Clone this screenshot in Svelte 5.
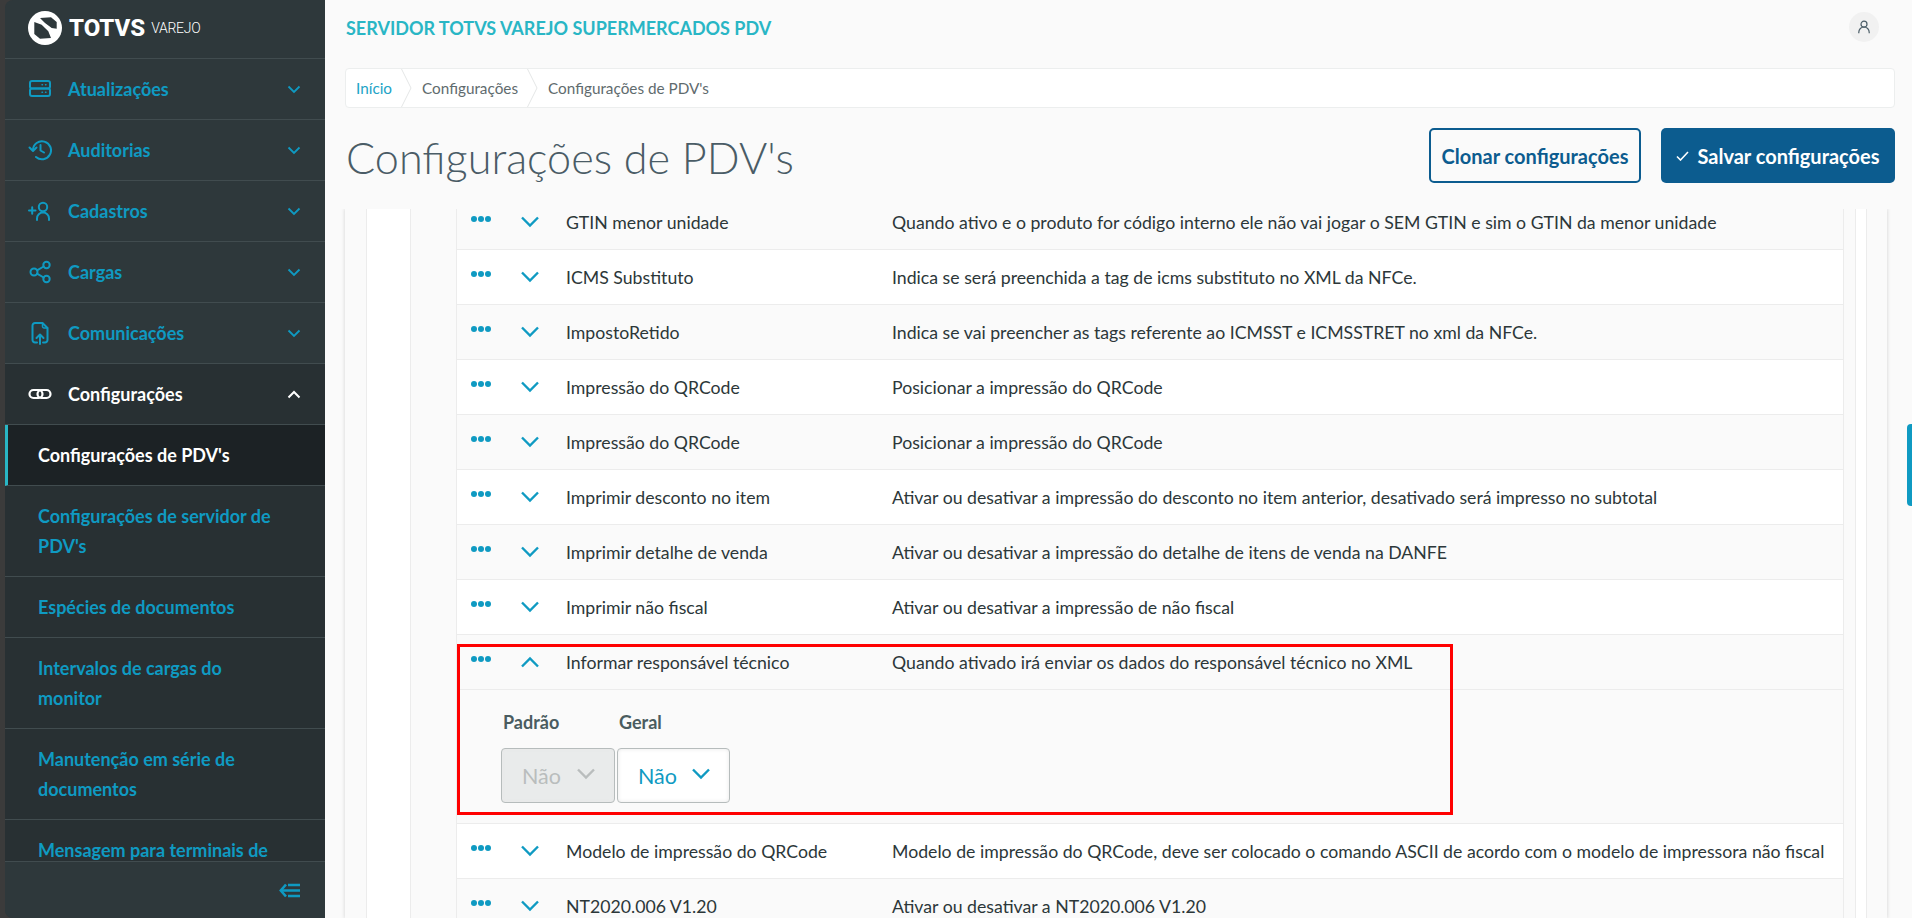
<script>
  const menu = [
    { label: 'Atualizações', icon: 'server' },
    { label: 'Auditorias', icon: 'history' },
    { label: 'Cadastros', icon: 'user-plus' },
    { label: 'Cargas', icon: 'share' },
    { label: 'Comunicações', icon: 'upload' }
  ];

  const subItems = [
    { label: "Configurações de PDV's", active: true },
    { label: 'Configurações de servidor de PDV\'s' },
    { label: 'Espécies de documentos' },
    { label: 'Intervalos de cargas do monitor' },
    { label: 'Manutenção em série de documentos' },
    { label: 'Mensagem para terminais de' }
  ];

  const params = [
    { name: 'GTIN menor unidade', desc: 'Quando ativo e o produto for código interno ele não vai jogar o SEM GTIN e sim o GTIN da menor unidade' },
    { name: 'ICMS Substituto', desc: 'Indica se será preenchida a tag de icms substituto no XML da NFCe.' },
    { name: 'ImpostoRetido', desc: 'Indica se vai preencher as tags referente ao ICMSST e ICMSSTRET no xml da NFCe.' },
    { name: 'Impressão do QRCode', desc: 'Posicionar a impressão do QRCode' },
    { name: 'Impressão do QRCode', desc: 'Posicionar a impressão do QRCode' },
    { name: 'Imprimir desconto no item', desc: 'Ativar ou desativar a impressão do desconto no item anterior, desativado será impresso no subtotal' },
    { name: 'Imprimir detalhe de venda', desc: 'Ativar ou desativar a impressão do detalhe de itens de venda na DANFE' },
    { name: 'Imprimir não fiscal', desc: 'Ativar ou desativar a impressão de não fiscal' },
    { name: 'Informar responsável técnico', desc: 'Quando ativado irá enviar os dados do responsável técnico no XML', open: true },
    { name: 'Modelo de impressão do QRCode', desc: 'Modelo de impressão do QRCode, deve ser colocado o comando ASCII de acordo com o modelo de impressora não fiscal' },
    { name: 'NT2020.006 V1.20', desc: 'Ativar ou desativar a NT2020.006 V1.20' }
  ];
</script>

<div class="page">
  <aside class="sidebar">
    <div class="side-inner">
      <div class="logo">
        <svg width="36" height="36" viewBox="0 0 36 36">
          <circle cx="18" cy="18" r="17" fill="#fff" />
          <path d="M13 8L24 7.300 29.700 12V18.700L24.700 18 18 13Z M7.300 12L14.700 14.700 21.300 21.300 24 28 13 28.700 7.300 24Z" fill="#2e383b" />
        </svg>
        <span class="totvs">TOTVS</span>
        <span class="varejo">VAREJO</span>
      </div>

      <nav class="nav">
        {#each menu as item}
          <div class="nav-row">
            <svg class="nav-icon" width="24" height="24" viewBox="0 0 24 24" fill="none" stroke="currentColor" stroke-width="2" stroke-linecap="round" stroke-linejoin="round">
              {#if item.icon === 'server'}
                <rect x="2" y="4" width="20" height="7.5" rx="2" />
                <rect x="2" y="11.5" width="20" height="7.5" rx="2" />
                <path d="M14 7.7h.5M17.5 7.7h.5M14 15.2h.5M17.5 15.2h.5" stroke-width="1.4" />
              {:else if item.icon === 'history'}
                <path d="M5 12a9 9 0 1 1 3 7" />
                <path d="M1.500 9.500L5 13l3.500-3.500" />
                <path d="M12.500 7v5.500l3.500 2" />
              {:else if item.icon === 'user-plus'}
                <path d="M1 11.500h6.500M4.200 8.200v6.600" />
                <circle cx="15" cy="8" r="4.200" />
                <path d="M9 21v-1.500a6 6 0 0 1 12 0V21" />
              {:else if item.icon === 'share'}
                <circle cx="6" cy="12" r="3.500" />
                <circle cx="18.500" cy="5" r="3.200" />
                <circle cx="18.500" cy="19" r="3.200" />
                <path d="M9 10.300l6.700-3.800M9 13.700l6.700 3.800" />
              {:else}
                <path d="M9 21.500H7a2.500 2.500 0 0 1-2.500-2.500V4.500A2.500 2.500 0 0 1 7 2h7.500l5 5v12a2.500 2.500 0 0 1-2.500 2.500h-2" />
                <path d="M12 23v-9M8.500 17l3.500-3.500 3.500 3.500" />
                <path d="M14.500 2v3.500a1.500 1.500 0 0 0 1.500 1.500h3.500" stroke-width="1.500" />
              {/if}
            </svg>
            <span class="nav-label">{item.label}</span>
            <svg class="nav-chevron" width="14" height="9" viewBox="0 0 14 9" fill="none" stroke="currentColor" stroke-width="1.800"><path d="M1.500 1.500L7 7l5.500-5.500" /></svg>
          </div>
        {/each}

        <div class="nav-row open">
          <svg class="nav-icon" width="24" height="24" viewBox="0 0 24 24" fill="none" stroke="currentColor" stroke-width="2.200">
            <rect x="1.500" y="8" width="13" height="8" rx="4" />
            <rect x="9.500" y="8" width="13" height="8" rx="4" />
          </svg>
          <span class="nav-label">Configurações</span>
          <svg class="nav-chevron" width="14" height="9" viewBox="0 0 14 9" fill="none" stroke="currentColor" stroke-width="2"><path d="M1.500 7.500L7 2l5.500 5.500" /></svg>
        </div>

        <div class="sub">
          {#each subItems as sub}
            <div class="sub-row" class:active={sub.active}>{sub.label}</div>
          {/each}
        </div>
      </nav>

      <div class="side-foot">
        <svg width="21" height="15" viewBox="0 0 21 15" fill="none" stroke="currentColor" stroke-width="2.600"><path d="M7 1.500L1.800 7.500 7 13.500" /><path d="M2 7.500H21M9 2H21M9 13H21" /></svg>
      </div>
    </div>
  </aside>

  <main class="main">
    <header class="topbar">
      <span class="server">SERVIDOR TOTVS VAREJO SUPERMERCADOS PDV</span>
      <span class="avatar">
        <svg width="14" height="14" viewBox="0 0 14 14" fill="none" stroke="#4a5c66" stroke-width="1.200"><circle cx="7" cy="4.200" r="3" /><path d="M1.800 13.200v-1a5.200 5.200 0 0 1 10.400 0v1" /></svg>
      </span>
    </header>

    <div class="crumbs">
      <span class="crumb link">Início</span>
      <svg class="crumb-sep" width="11" height="38" viewBox="0 0 11 38" fill="none" stroke="#e4e6e6"><path d="M0.500 0L10 19 0.500 38" /></svg>
      <span class="crumb">Configurações</span>
      <svg class="crumb-sep" width="11" height="38" viewBox="0 0 11 38" fill="none" stroke="#e4e6e6"><path d="M0.500 0L10 19 0.500 38" /></svg>
      <span class="crumb">Configurações de PDV's</span>
    </div>

    <div class="title-row">
      <h1>Configurações de PDV's</h1>
      <div class="actions">
        <button class="btn outline">Clonar configurações</button>
        <button class="btn solid">
          <svg width="13" height="10" viewBox="0 0 13 10" fill="none" stroke="#fff" stroke-width="1.600"><path d="M1 5.500L4.500 9 12 1" /></svg>
          Salvar configurações
        </button>
      </div>
    </div>

    <div class="content">
      <div class="shell">
        <div class="panel">
          <div class="panel-in">
            <div class="gutter">
              <div class="table">
                {#each params as p}
                  <div class="item">
                    <div class="row">
                      <span class="dots"><i></i><i></i><i></i></span>
                      <svg class="row-chevron" width="20" height="12" viewBox="0 0 20 12" fill="none" stroke="currentColor" stroke-width="2.400">
                        {#if p.open}
                          <path d="M2 10.500L10 2.500l8 8" />
                        {:else}
                          <path d="M2 1.500L10 9.500l8-8" />
                        {/if}
                      </svg>
                      <span class="name">{p.name}</span>
                      <span class="desc">{p.desc}</span>
                    </div>
                    {#if p.open}
                      <div class="detail">
                        <div class="field first">
                          <label for="padrao">Padrão</label>
                          <div id="padrao" class="select off">
                            <span>Não</span>
                            <svg width="20" height="12" viewBox="0 0 20 12" fill="none" stroke="currentColor" stroke-width="2.400"><path d="M2 1.500L10 9.500l8-8" /></svg>
                          </div>
                        </div>
                        <div class="field">
                          <label for="geral">Geral</label>
                          <div id="geral" class="select">
                            <span>Não</span>
                            <svg width="20" height="12" viewBox="0 0 20 12" fill="none" stroke="currentColor" stroke-width="2.400"><path d="M2 1.500L10 9.500l8-8" /></svg>
                          </div>
                        </div>
                      </div>
                    {/if}
                  </div>
                {/each}
              </div>
            </div>
          </div>
        </div>
      </div>
      <div class="thumb"></div>
    </div>
  </main>

  <div class="mark"></div>
</div>

<style>
  :global(body) {
    margin: 0;
    background: #fafafa;
  }

  .page {
    --sans: 'Lato', 'Open Sans', sans-serif;
    display: flex;
    height: 918px;
    overflow: hidden;
    font-family: var(--sans);
    background: #fafafa;
    color: #2c3739;
  }

  .sidebar {
    width: 325px;
    flex: none;
    background: #3b3b3b;
    padding-left: 5px;
    box-sizing: border-box;
  }

  .side-inner {
    height: 100%;
    display: flex;
    flex-direction: column;
    background: #2e383b;
    border-radius: 8px 0 0 8px;
    overflow: hidden;
  }

  .logo {
    height: 59px;
    flex: none;
    display: flex;
    align-items: center;
    padding: 0 0 2px 22px;
    box-sizing: border-box;
    color: #fff;
    border-bottom: 1px solid #414c4f;
  }

  .totvs {
    margin-left: 6px;
    font: 800 24px/1 'Roboto', sans-serif;
  }

  .varejo {
    margin-left: 6px;
    font: 300 14px/1 'Roboto', sans-serif;
    letter-spacing: -0.3px;
  }

  .nav {
    flex: 1;
    min-height: 0;
    overflow: hidden;
  }

  .nav-row {
    height: 61px;
    box-sizing: border-box;
    display: flex;
    align-items: center;
    padding: 0 24px 0 23px;
    color: #0f9ac2;
    border-bottom: 1px solid #414c4f;
  }

  .nav-row.open {
    color: #fff;
    background: #283033;
  }

  .nav-icon {
    flex: none;
    width: 24px;
    margin-right: 16px;
  }

  .nav-label {
    flex: 1;
    font-size: 18px;
    font-weight: 700;
  }

  .sub {
    background: #283033;
  }

  .sub-row {
    padding: 15px 37px 15px 33px;
    font-size: 18px;
    font-weight: 700;
    line-height: 30px;
    color: #0f9ac2;
    border-bottom: 1px solid #414c4f;
  }

  .sub-row.active {
    color: #fff;
    background: #1c2225;
    padding-left: 30px;
    border-left: 3px solid #29b6c5;
  }

  .side-foot {
    height: 57px;
    flex: none;
    display: flex;
    align-items: center;
    justify-content: flex-end;
    padding-right: 25px;
    box-sizing: border-box;
    color: #0f9ac2;
    background: #2e383b;
    border-top: 1px solid #414c4f;
  }

  .main {
    flex: 1;
    min-width: 0;
    display: flex;
    flex-direction: column;
  }

  .topbar {
    height: 68px;
    flex: none;
    box-sizing: border-box;
    display: flex;
    justify-content: space-between;
    padding: 12px 33px 0 21px;
  }

  .server {
    margin-top: 1px;
    font-size: 18px;
    font-weight: 700;
    line-height: 30px;
    color: #29b6c5;
  }

  .avatar {
    width: 30px;
    height: 30px;
    display: flex;
    align-items: center;
    justify-content: center;
    border-radius: 50%;
    background: #f1f1f1;
  }

  .crumbs {
    height: 40px;
    flex: none;
    box-sizing: border-box;
    margin: 0 17px 0 20px;
    padding-left: 10px;
    display: flex;
    align-items: center;
    font-size: 15.300px;
    color: #5f6b6e;
    background: #fff;
    border: 1px solid #eceeee;
    border-radius: 4px;
  }

  .crumb.link {
    color: #22a3c6;
  }

  .crumb-sep {
    flex: none;
    margin: 0 10px 0 9px;
  }

  .title-row {
    height: 101px;
    flex: none;
    box-sizing: border-box;
    display: flex;
    justify-content: space-between;
    align-items: flex-start;
    margin: 0 17px 0 21px;
    padding-top: 20px;
  }

  h1 {
    margin: 0;
    font-size: 43.200px;
    font-weight: 300;
    line-height: 58px;
    color: #4a5c66;
  }

  .actions {
    display: flex;
    gap: 20px;
  }

  .btn {
    height: 55px;
    box-sizing: border-box;
    display: flex;
    align-items: center;
    justify-content: center;
    gap: 8px;
    font-family: var(--sans);
    font-size: 20px;
    font-weight: 700;
    border-radius: 5px;
  }

  .outline {
    width: 212px;
    color: #0c5c8f;
    background: #fafafa;
    border: 2px solid #0c5c8f;
  }

  .solid {
    width: 234px;
    color: #fff;
    background: #0c5c8f;
    border: 0;
  }

  .content {
    position: relative;
    flex: 1;
    min-height: 0;
    overflow: hidden;
    padding: 0 25px 0 20px;
  }

  .thumb {
    position: absolute;
    top: 215px;
    right: 0;
    width: 5px;
    height: 82px;
    background: #0f9ac2;
    border-radius: 4px 0 0 4px;
  }

  .shell {
    height: 100%;
    padding-left: 21px;
    padding-right: 20px;
    box-shadow: -1px 0 3px #e2e2e2, 1px 0 3px #e2e2e2;
  }

  .panel {
    height: 100%;
    background: #fff;
    padding-left: 44px;
    padding-right: 10px;
    border-left: 1px solid #ececec;
    border-right: 1px solid #ececec;
  }

  .panel-in {
    height: 100%;
    background: #fafafa;
    padding-left: 45px;
    padding-right: 11px;
    border-left: 1px solid #ececec;
    border-right: 1px solid #ececec;
    margin-left: -1px;
  }

  .gutter {
    height: 100%;
    overflow: hidden;
    background: #fff;
    border-left: 1px solid #ececec;
    border-right: 1px solid #ececec;
  }

  .table {
    margin-top: -14px;
  }

  .item {
    background: #fff;
    border-bottom: 1px solid #ececec;
  }

  .item:nth-child(odd) {
    background: #fafafa;
  }

  .row {
    height: 54px;
    display: flex;
    align-items: center;
    font-size: 17.700px;
    color: #2c3739;
  }

  .dots {
    width: 20px;
    margin: -6px 0 0 14px;
    display: flex;
    justify-content: space-between;
  }

  .dots i {
    width: 6px;
    height: 6px;
    border-radius: 50%;
    background: #0f9ac2;
  }

  .row-chevron {
    margin: -1px 0 0 29px;
    color: #0f9ac2;
    flex: none;
  }

  .name {
    flex: none;
    width: 326px;
    margin-left: 26px;
    white-space: nowrap;
  }

  .desc {
    white-space: nowrap;
  }

  .detail {
    display: flex;
    height: 134px;
    box-sizing: border-box;
    padding: 19px 0 0 44px;
    gap: 2px;
    border-top: 1px solid #ececec;
  }

  .field {
    display: flex;
    flex-direction: column;
  }

  label {
    height: 39px;
    padding-left: 2px;
    font-size: 18px;
    font-weight: 700;
    line-height: 26px;
    color: #4a5c60;
  }

  .select {
    width: 113px;
    height: 55px;
    box-sizing: border-box;
    padding: 0 18px 0 20px;
    display: flex;
    align-items: center;
    justify-content: space-between;
    font-size: 21.500px;
    color: #0f9ac2;
    background: #fff;
    border: 1px solid #b6bcbc;
    border-radius: 4px;
    box-shadow: inset 0 0 4px #e8e8e8;
  }

  .select svg {
    margin-top: -4px;
  }

  .select.off {
    width: 114px;
    color: #b9bdbd;
    background: #e9ebeb;
  }

  .mark {
    position: absolute;
    left: 457px;
    top: 644px;
    width: 996px;
    height: 171px;
    box-sizing: border-box;
    border: 3px solid #f00;
    pointer-events: none;
  }
</style>
